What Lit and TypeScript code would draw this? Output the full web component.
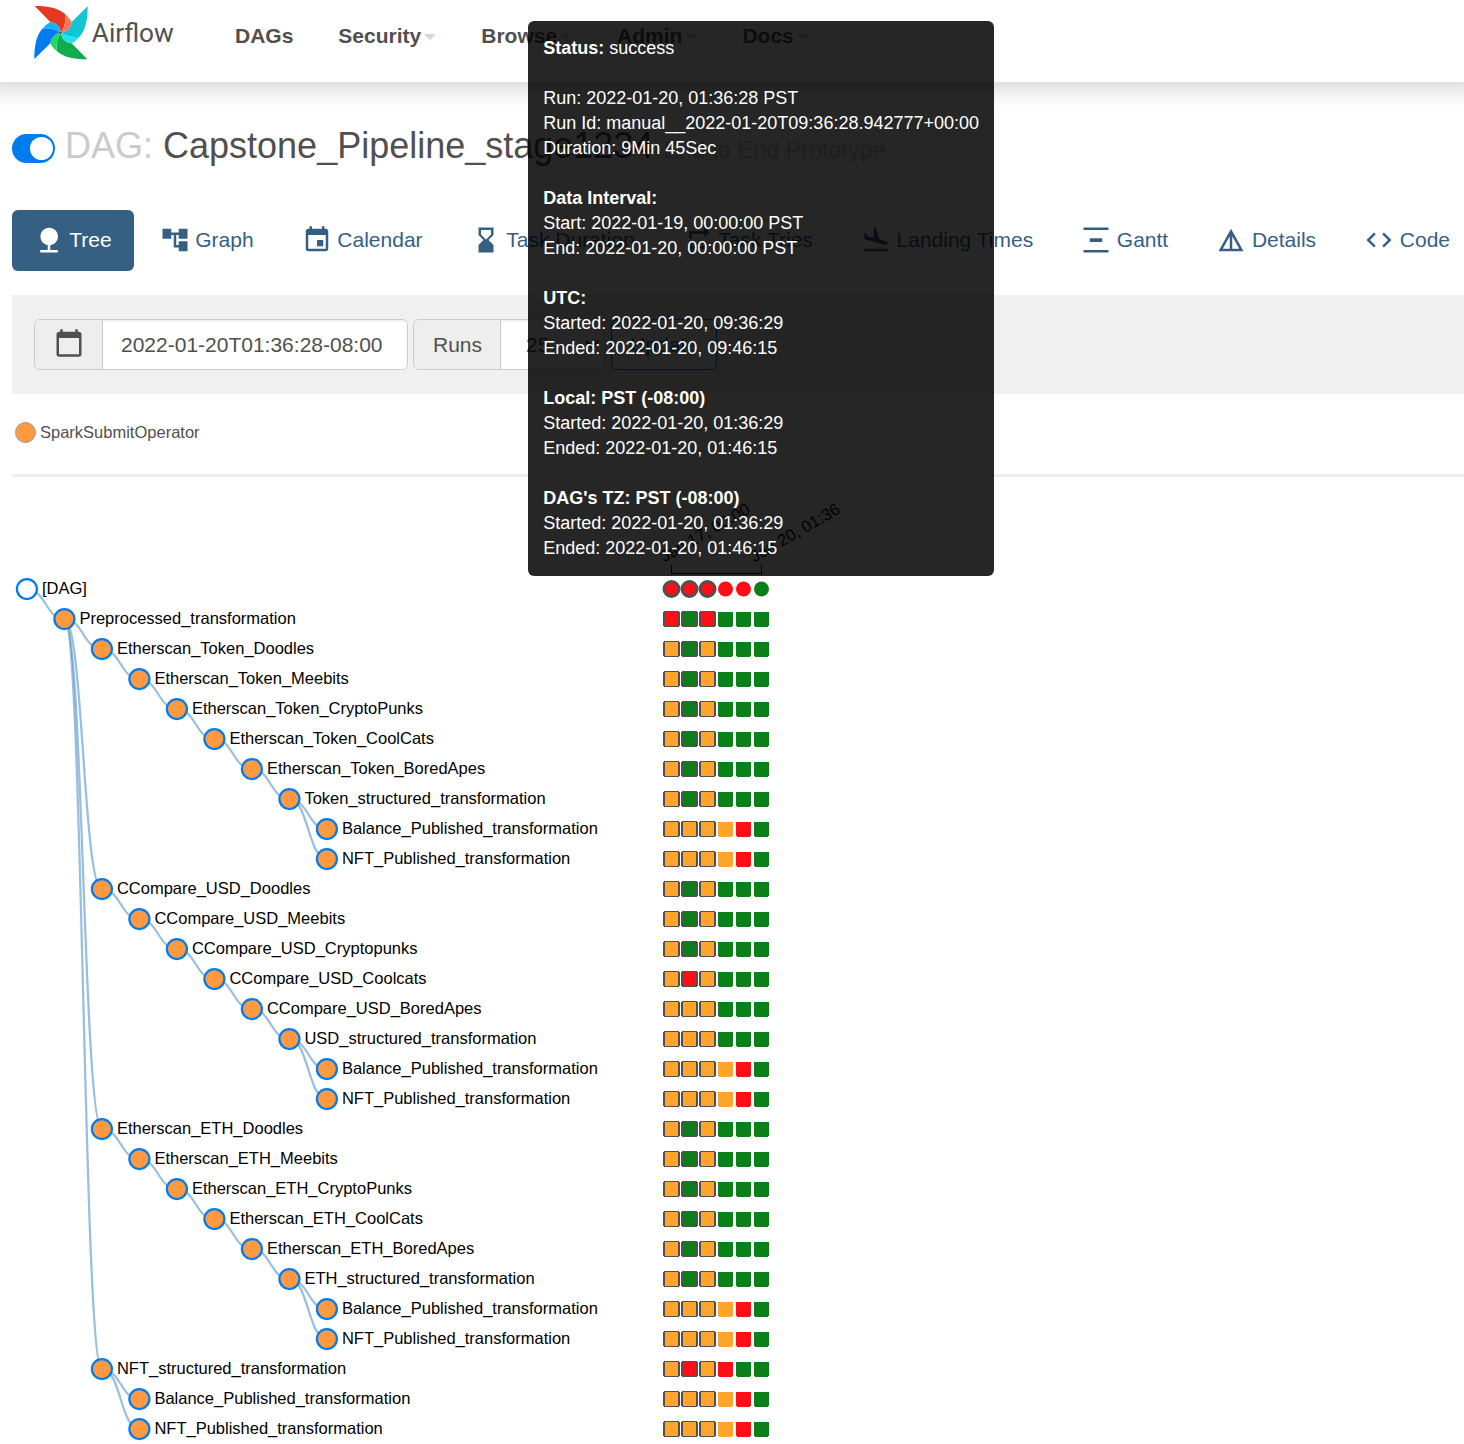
import { LitElement, html, svg, css } from "lit";
import { customElement } from "lit/decorators.js";

const NAV = ["DAGs", "Security", "Browse", "Admin", "Docs"];

const TABS: [string, string][] = [
  ["Tree", "M13 16.12c3.47-.41 6.17-3.36 6.17-6.95 0-3.87-3.13-7-7-7s-7 3.13-7 7c0 3.47 2.52 6.34 5.83 6.89V20H5v2h14v-2h-6v-3.88z"],
  ["Graph", "M22 11V3h-7v3H9V3H2v8h7V8h2v10h4v3h7v-8h-7v3h-2V8h2v3z"],
  ["Calendar", "M17 12h-5v5h5v-5zM16 1v2H8V1H6v2H5c-1.11 0-1.99.9-1.99 2L3 19c0 1.1.89 2 2 2h14c1.1 0 2-.9 2-2V5c0-1.1-.9-2-2-2h-1V1h-2zm3 18H5V8h14v11z"],
  ["Task Duration", "M18 22l-.01-6L14 12l3.99-4.01L18 2H6v6l4 4-4 3.99V22h12zM8 7.5V4h8v3.5l-4 4-4-4z"],
  ["Task Tries", "M7 7h10v3l4-4-4-4v3H5v6h2V7zm10 10H7v-3l-4 4 4 4v-3h12v-6h-2v4z"],
  ["Landing Times", "M2.5 19h19v2h-19v-2zm16.84-3.15c.8.21 1.62-.26 1.84-1.06.21-.8-.26-1.62-1.06-1.84l-5.31-1.42-2.76-9.02L10.12 2v8.28L5.15 8.95l-.93-2.32-1.45-.39v5.17l16.57 4.44z"],
  ["Gantt", "M22 2v2H2V2h20zM7 10.5v3h10v-3H7zM2 20v2h20v-2H2z"],
  ["Details", "M12 3L2 21h20L12 3zm1 5.92L18.6 19H13V8.92zm-2 0V19H5.4L11 8.92z"],
  ["Code", "M9.4 16.6L4.8 12l4.6-4.6L8 6l-6 6 6 6 1.4-1.4zm5.2 0l4.6-4.6-4.6-4.6L16 6l6 6-6 6-1.4-1.4z"],
];

const CALENDAR =
  "M20 3h-1V1h-2v2H7V1H5v2H4c-1.1 0-2 .9-2 2v16c0 1.1.9 2 2 2h16c1.1 0 2-.9 2-2V5c0-1.1-.9-2-2-2zm0 18H4V8h16v13z";

// name, depth, row of the parent, run states (r = failed, g = success, o = upstream failed)
const TASKS: [string, number, number, string][] = [
  ["[DAG]", 0, -1, "rrrrrg"],
  ["Preprocessed_transformation", 1, 0, "rgrggg"],
  ["Etherscan_Token_Doodles", 2, 1, "ogoggg"],
  ["Etherscan_Token_Meebits", 3, 2, "ogoggg"],
  ["Etherscan_Token_CryptoPunks", 4, 3, "ogoggg"],
  ["Etherscan_Token_CoolCats", 5, 4, "ogoggg"],
  ["Etherscan_Token_BoredApes", 6, 5, "ogoggg"],
  ["Token_structured_transformation", 7, 6, "ogoggg"],
  ["Balance_Published_transformation", 8, 7, "oooorg"],
  ["NFT_Published_transformation", 8, 7, "oooorg"],
  ["CCompare_USD_Doodles", 2, 1, "ogoggg"],
  ["CCompare_USD_Meebits", 3, 10, "ogoggg"],
  ["CCompare_USD_Cryptopunks", 4, 11, "ogoggg"],
  ["CCompare_USD_Coolcats", 5, 12, "oroggg"],
  ["CCompare_USD_BoredApes", 6, 13, "oooggg"],
  ["USD_structured_transformation", 7, 14, "oooggg"],
  ["Balance_Published_transformation", 8, 15, "oooorg"],
  ["NFT_Published_transformation", 8, 15, "oooorg"],
  ["Etherscan_ETH_Doodles", 2, 1, "ogoggg"],
  ["Etherscan_ETH_Meebits", 3, 18, "ogoggg"],
  ["Etherscan_ETH_CryptoPunks", 4, 19, "ogoggg"],
  ["Etherscan_ETH_CoolCats", 5, 20, "ogoggg"],
  ["Etherscan_ETH_BoredApes", 6, 21, "ogoggg"],
  ["ETH_structured_transformation", 7, 22, "ogoggg"],
  ["Balance_Published_transformation", 8, 23, "oooorg"],
  ["NFT_Published_transformation", 8, 23, "oooorg"],
  ["NFT_structured_transformation", 2, 1, "ororgg"],
  ["Balance_Published_transformation", 3, 26, "oooorg"],
  ["NFT_Published_transformation", 3, 26, "oooorg"],
];

const STATE: Record<string, string> = { r: "#ff0e17", g: "#0b8018", o: "#ffa42c" };

const BLADES: [number, string, string][] = [
  [180, "#11ac4e", "#1bdb66"],
  [90, "#11c5d4", "#1fe3f2"],
  [270, "#017cee", "#16b3fa"],
  [0, "#e43921", "#ff7557"],
];

const SECTIONS: [string, string[]][] = [
  ["Data Interval:", ["Start: 2022-01-19, 00:00:00 PST", "End: 2022-01-20, 00:00:00 PST"]],
  ["UTC:", ["Started: 2022-01-20, 09:36:29", "Ended: 2022-01-20, 09:46:15"]],
  ["Local: PST (-08:00)", ["Started: 2022-01-20, 01:36:29", "Ended: 2022-01-20, 01:46:15"]],
  ["DAG's TZ: PST (-08:00)", ["Started: 2022-01-20, 01:36:29", "Ended: 2022-01-20, 01:46:15"]],
];

const icon = (d: string) => html`<svg class="icon" viewBox="0 0 24 24"><path d=${d}></path></svg>`;

@customElement("dag-tree")
export class DagTree extends LitElement {
  static styles = css`
    :host { display: block; }
    svg { display: block; font: 16.5px "Liberation Sans", Arial, sans-serif; }
    .link { fill: none; stroke: #3182bd; stroke-opacity: 0.5; stroke-width: 2.25; }
    .node { fill: #ff9a42; stroke: #017cee; stroke-width: 2.25; }
    .node.root { fill: #fff; }
    .axis { fill: none; stroke: #000; stroke-width: 1.5; shape-rendering: crispEdges; }
    .state { shape-rendering: crispEdges; }
    .manual { stroke: #51504f; stroke-width: 1; }
    .run.manual { stroke-width: 2; }
  `;

  render() {
    const x = (depth: number) => 14.9 + depth * 37.5;
    const y = (row: number) => 112 + row * 30;
    return html`<svg width="1452" height="967" viewBox="0 0 1452 967">
      ${TASKS.map(([, depth, parent], row) => {
        if (parent < 0) return null;
        const mid = x(depth) - 18.75;
        return svg`<path class="link" d="M${x(depth - 1)},${y(parent)}C${mid},${y(parent)} ${mid},${y(row)} ${x(depth)},${y(row)}"></path>`;
      })}
      <path class="axis" d="M659.5 88V96.5H749.5V88"></path>
      <text transform="translate(652.500,85.500) rotate(-30)">Jan 17, 00:00</text>
      <text transform="translate(742.500,85.500) rotate(-30)">Jan 20, 01:36</text>
      ${TASKS.map(
        ([name, depth, , states], row) => svg`
          <circle class="node ${row ? "" : "root"}" cx=${x(depth)} cy=${y(row)} r="10"></circle>
          <text x=${x(depth) + 15} y=${y(row) + 5}>${name}</text>
          ${[...states].map((s, i) =>
            row
              ? svg`<rect class="state ${i < 3 ? "manual" : ""}" transform="translate(${652 + i * 18},${y(row) - 7.42}) scale(1.5)" width="10" height="10" rx="1" fill=${STATE[s]}></rect>`
              : svg`<circle class="run ${i < 3 ? "manual" : ""}" transform="translate(${659.5 + i * 18},${y(row)}) scale(1.5)" r="5" fill=${STATE[s]}></circle>`
          )}`
      )}
    </svg>`;
  }
}

@customElement("app-root")
export class AppRoot extends LitElement {
  static styles = css`
    :host {
      display: block; position: relative; width: 1464px; height: 1444px; overflow: hidden;
      background: #fff; color: #51504f; font: 21px/30px "Liberation Sans", Arial, sans-serif;
    }
    * { box-sizing: border-box; }
    .icon { width: 30px; height: 30px; fill: currentColor; flex: none; }
    header { height: 82px; display: flex; background: #fff; box-shadow: 0 -16px 26px 20px rgba(0, 0, 0, 0.2); }
    .brand { width: 179px; margin-left: 33.5px; padding-top: 5.5px; display: flex; }
    .pinwheel { width: 54px; height: 54px; flex: none; }
    .word { width: 90px; height: 54px; margin-left: 2px; fill: #51504f; font-family: Roboto, sans-serif; font-size: 25.5px; }
    nav { display: flex; height: 72px; align-items: center; font-weight: bold; }
    .menu { padding: 0 22.5px; display: flex; align-items: center; }
    .caret { margin: 2px 0 0 3px; border: 6px solid transparent; border-top-color: #e0d0e0; border-bottom: 0; }
    main { padding-left: 12px; }
    .title { display: flex; align-items: baseline; height: 128px; font-size: 36px; line-height: 128px; white-space: nowrap; }
    .toggle { width: 43px; height: 29px; border-radius: 15px; background: #017cee; padding: 3px 2.5px; margin-right: 10px; align-self: flex-start; margin-top: 52px; display: flex; justify-content: flex-end; }
    .knob { width: 23px; height: 23px; border-radius: 50%; background: #fff; }
    .muted { color: #cbcbcb; }
    .desc { font-size: 23.4px; color: #cbcbcb; margin-left: 10px; }
    .tabs { display: flex; gap: 4px; white-space: nowrap; color: #365f84; }
    .tab { height: 61px; padding: 0 22.5px 2px 21.5px; border-radius: 6px; display: flex; align-items: center; gap: 5.7px; flex: none; }
    .tab.active { background: #365f84; color: #fff; }
    .filters { height: 99px; margin-top: 24px; padding: 24px 22px; background: #f0f0f0; display: flex; }
    .group { height: 51px; display: flex; border: 1.5px solid #ccc; border-radius: 6px; overflow: hidden; margin-right: 5px; }
    .addon { background: #eee; border-right: 1px solid #ccc; display: flex; align-items: center; justify-content: center; }
    .cal { width: 68px; padding: 0 0 4px 0; }
    .runs { width: 87px; padding-left: 1px; }
    .field { background: #fff; box-shadow: inset 0 1.5px 1.5px rgba(0, 0, 0, 0.075); display: flex; align-items: center; padding-left: 18px; }
    .date { width: 304px; }
    .count { width: 103px; padding: 0 5px 0 25px; justify-content: space-between; }
    .chev { width: 14px; height: 9px; fill: none; stroke: #222; stroke-width: 2.4; }
    .update { height: 51px; width: 106px; margin-left: 1px; border: 1.5px solid #017cee; border-radius: 6px; background: #fff; color: #017cee; display: flex; align-items: center; justify-content: center; }
    .legend { height: 80px; display: flex; align-items: center; gap: 4px; padding: 0 0 3px 3px; font-size: 16.5px; }
    .operator { padding-bottom: 2px; }
    .swatch { width: 21px; height: 21px; border-radius: 50%; background: #ff9a42; border: 1.5px solid #999; }
    .rule { height: 3px; background: #efefef; }
    .tip { position: absolute; left: 528px; top: 21px; width: 466px; height: 555px; padding: 15px 15px 15px 15.2px; border-radius: 6px; background: rgba(0, 0, 0, 0.85); color: #fff; font-size: 18px; line-height: 25px; white-space: nowrap; }
    .block { margin-bottom: 25px; }
  `;

  render() {
    return html`
      <header>
        <div class="brand">
          <svg class="pinwheel" viewBox="-81 -80 162 162">
            ${BLADES.map(
              ([angle, dark, light]) => svg`<g transform="rotate(${angle})">
                <path fill=${dark} d="M-79-80C-45-80-10-76 12-56C16-35 10-15 0 0C-1-15-12-30-32-32Z"></path>
                <path fill=${light} d="M12-56C20-49 28-40 32-32C30-12 15-1 0 0C10-15 16-35 12-56Z"></path>
              </g>`
            )}
            <circle r="3" fill="#51504f"></circle>
          </svg>
          <svg class="word"><text x="1.800" y="36" textLength="82" lengthAdjust="spacingAndGlyphs">Airflow</text></svg>
        </div>
        <nav>
          ${NAV.map((n, i) => html`<div class="menu">${n}${i ? html`<span class="caret"></span>` : null}</div>`)}
        </nav>
      </header>
      <main>
        <div class="title">
          <span class="toggle"><span class="knob"></span></span>
          <span><span class="muted">DAG:</span> Capstone_Pipeline_stage1234</span>
          <span class="desc">End to End Prototype</span>
        </div>
        <div class="tabs">
          ${TABS.map(([n, d], i) => html`<div class="tab ${i ? "" : "active"}">${icon(d)}<span>${n}</span></div>`)}
        </div>
        <div class="filters">
          <div class="group">
            <div class="addon cal">${icon(CALENDAR)}</div>
            <div class="field date">2022-01-20T01:36:28-08:00</div>
          </div>
          <div class="group">
            <div class="addon runs">Runs</div>
            <div class="field count">25<svg class="chev" viewBox="0 0 14 9"><path d="M1 1L7 7L13 1"></path></svg></div>
          </div>
          <div class="update">Update</div>
        </div>
        <div class="legend"><span class="swatch"></span><span class="operator">SparkSubmitOperator</span></div>
        <div class="rule"></div>
        <dag-tree></dag-tree>
      </main>
      <div class="tip">
        <div class="block"><b>Status:</b> success</div>
        <div class="block">
          <div>Run: 2022-01-20, 01:36:28 PST</div>
          <div>Run Id: manual__2022-01-20T09:36:28.942777+00:00</div>
          <div>Duration: 9Min 45Sec</div>
        </div>
        ${SECTIONS.map(([h, rows]) => html`<div class="block"><b>${h}</b>${rows.map((r) => html`<div>${r}</div>`)}</div>`)}
      </div>
    `;
  }
}
